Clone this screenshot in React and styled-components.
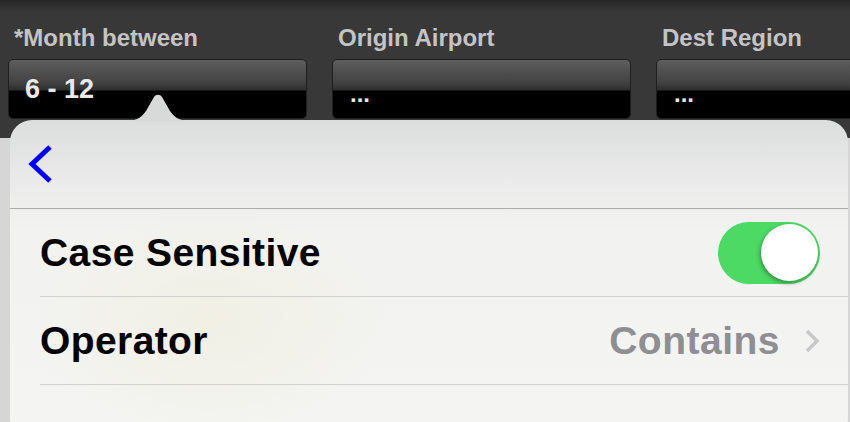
import React from 'react'
import styled, { createGlobalStyle } from 'styled-components'

const GlobalStyle = createGlobalStyle`
    html, body {
        margin: 0;
        padding: 0;
        background: #d4d4d4;
        font-family: "Liberation Sans", Arial, sans-serif;
        overflow: hidden;
    }
`

const Page = styled.div`
    position: relative;
    width: 850px;
    height: 422px;
    overflow: hidden;
    background: linear-gradient(to bottom, #c6ced6 0px, #c6ced6 12px, #a8a8a8 14px, #d6d6d6 80px);
`

const Header = styled.div`
    height: 138px;
    background: linear-gradient(to bottom, #262626 0px, #383838 12px, #383838 100%);
    display: flex;
    gap: 25px;
    padding: 24px 0 0 8px;
    box-sizing: border-box;
`

const Field = styled.div`
    display: flex;
    flex-direction: column;
    width: 299px;
    flex-shrink: 0;
`

const Label = styled.span`
    font-size: 24px;
    font-weight: bold;
    color: #c4c4c4;
    padding-left: 6px;
    height: 35px;
    line-height: 28px;
    white-space: nowrap;
`

const Input = styled.div`
    height: 60px;
    border: 1px solid #1e1e1e;
    border-radius: 5px;
    box-sizing: border-box;
    background: linear-gradient(to bottom, #5d5d5d 0px, #434343 22px, #2e2e2e 30px, #000 31px, #000 100%);
    color: #e8e8e8;
    font-weight: bold;
    font-size: ${p => p.$empty ? '24px' : '27px'};
    padding: ${p => p.$empty ? '18px 0 0 17px' : '13px 0 0 16px'};
    line-height: 32px;
`

const Popover = styled.div`
    position: absolute;
    left: 10px;
    top: 120px;
    width: 838px;
    height: 320px;
    border-radius: 22px;
    background:
        radial-gradient(ellipse 180px 120px at 200px 200px, rgba(240, 238, 220, 0.6), rgba(240, 238, 220, 0)),
        linear-gradient(to bottom, #dcdddd 0px, #eaeaea 60px, #f2f2f0 110px, #f4f4f2 100%);
`

const Arrow = styled.svg`
    position: absolute;
    left: 112px;
    top: -27px;
`

const NavBar = styled.div`
    height: 88px;
    border-bottom: 1px solid #adadad;
    display: flex;
    align-items: center;
    padding-left: 16px;
`

const Row = styled.div`
    height: 87px;
    margin-left: 30px;
    padding-right: 28px;
    border-bottom: 1px solid #d2d2d0;
    display: flex;
    align-items: center;
    justify-content: space-between;
`

const RowLabel = styled.span`
    font-size: 39px;
    font-weight: bold;
    color: #000;
    letter-spacing: 0.4px;
`

const Value = styled.div`
    display: flex;
    align-items: center;
    gap: 24px;
    font-size: 39px;
    font-weight: bold;
    color: #8e8e93;
    letter-spacing: 0.5px;
`

const Toggle = styled.div`
    width: 102px;
    height: 62px;
    border-radius: 31px;
    background: #4cd964;
    position: relative;
`

const Knob = styled.div`
    position: absolute;
    right: 2px;
    top: 2px;
    width: 57px;
    height: 57px;
    border-radius: 50%;
    background: #fff;
    box-shadow: -1px 2px 4px rgba(0, 0, 0, 0.35);
`

export default function App() {
    return (
        <Page>
            <GlobalStyle />
            <Header>
                <Field>
                    <Label>*Month between</Label>
                    <Input>6 - 12</Input>
                </Field>
                <Field>
                    <Label>Origin Airport</Label>
                    <Input $empty>...</Input>
                </Field>
                <Field>
                    <Label>Dest Region</Label>
                    <Input $empty>...</Input>
                </Field>
            </Header>
            <Popover>
                <Arrow width="72" height="28" viewBox="0 0 72 28">
                    <path d="M0 28 C14 28 18 26 24 18 L32 4 C34 1 38 1 40 4 L48 18 C54 26 58 28 72 28 Z" fill="#d8d9d9" />
                </Arrow>
                <NavBar>
                    <svg width="28" height="42" viewBox="0 0 28 42">
                        <path d="M24 4 L6 21 L24 38" fill="none" stroke="#0000ff" strokeWidth="5" />
                    </svg>
                </NavBar>
                <Row>
                    <RowLabel>Case Sensitive</RowLabel>
                    <Toggle><Knob /></Toggle>
                </Row>
                <Row>
                    <RowLabel>Operator</RowLabel>
                    <Value>
                        Contains
                        <svg width="16" height="24" viewBox="0 0 16 24">
                            <path d="M3 2 L13 12 L3 22" fill="none" stroke="#c7c7cc" strokeWidth="3.5" />
                        </svg>
                    </Value>
                </Row>
            </Popover>
        </Page>
    )
}
